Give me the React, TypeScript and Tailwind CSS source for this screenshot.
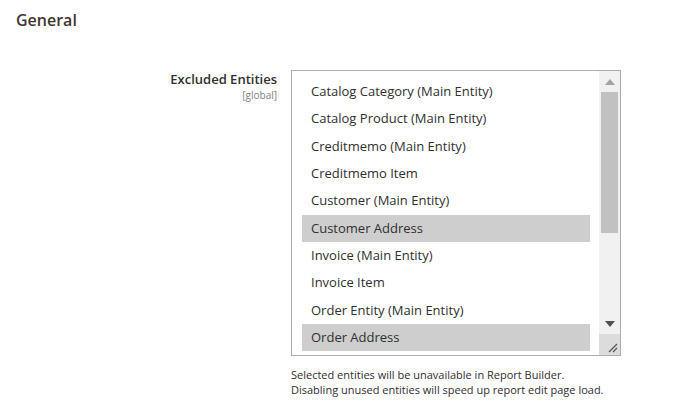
import React from "react";

const items = [
  { label: "Catalog Category (Main Entity)", sel: false },
  { label: "Catalog Product (Main Entity)", sel: false },
  { label: "Creditmemo (Main Entity)", sel: false },
  { label: "Creditmemo Item", sel: false },
  { label: "Customer (Main Entity)", sel: false },
  { label: "Customer Address", sel: true },
  { label: "Invoice (Main Entity)", sel: false },
  { label: "Invoice Item", sel: false },
  { label: "Order Entity (Main Entity)", sel: false },
  { label: "Order Address", sel: true },
];

export default function App() {
  return (
    <div
      className="w-[685px] h-[414px] bg-white text-[#303030] overflow-hidden"
      style={{ fontFamily: '"Open Sans", sans-serif' }}
    >
      <div className="pl-[16px] pt-[8px] text-[16px] leading-[24px] font-semibold text-[#41362f]">
        General
      </div>
      <div className="flex mt-[38px]">
        <div className="w-[277px] flex flex-col items-end pt-[1px]">
          <div className="text-[13px] leading-[16px] font-semibold text-[#303030]">
            Excluded Entities
          </div>
          <div className="text-[10px] leading-[14px] text-[#808080] mt-[1px]">[global]</div>
        </div>
        <div className="ml-[14px] flex flex-col">
          <div className="w-[330px] h-[286px] border border-[#adadad] flex">
            <div className="flex-1 pt-[7px] pl-[10px] pr-[9px] overflow-hidden">
              {items.map((it) => (
                <div
                  key={it.label}
                  className={
                    "h-[27.33px] flex items-center pl-[9px] text-[13px] whitespace-nowrap " +
                    (it.sel ? "bg-[#cecece]" : "")
                  }
                >
                  {it.label}
                </div>
              ))}
            </div>
            <div className="w-[21px] bg-[#f1f1f1] flex flex-col">
              <div className="h-[21px] flex items-center justify-center">
                <svg width="10" height="6" viewBox="0 0 10 6">
                  <path d="M0 6 L5 0 L10 6 Z" fill="#a3a3a3" />
                </svg>
              </div>
              <div className="h-[141px] mx-[2px] bg-[#c1c1c1]" />
              <div className="flex-1" />
              <div className="h-[21px] flex items-center justify-center">
                <svg width="10" height="6" viewBox="0 0 10 6">
                  <path d="M0 0 L10 0 L5 6 Z" fill="#505050" />
                </svg>
              </div>
              <div className="h-[21px] bg-[#dcdcdc] flex items-end justify-end pr-[2px] pb-[2px]">
                <svg width="12" height="12" viewBox="0 0 12 12">
                  <path d="M11 3 L3 11 M11 7 L7 11" stroke="#555" strokeWidth="1.2" />
                </svg>
              </div>
            </div>
          </div>
          <div className="mt-[11px] text-[11px] leading-[15px] text-[#303030]">
            <div>Selected entities will be unavailable in Report Builder.</div>
            <div>Disabling unused entities will speed up report edit page load.</div>
          </div>
        </div>
      </div>
    </div>
  );
}
